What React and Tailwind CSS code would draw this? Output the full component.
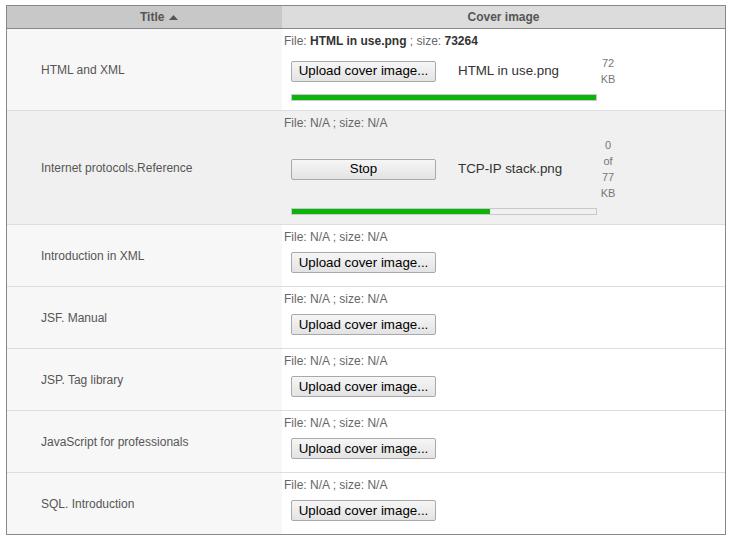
import React from 'react';

const rows = [
    { title: 'HTML and XML', file: 'HTML in use.png', size: '73264', upload: { name: 'HTML in use.png', lines: ['72', 'KB'], pct: 100, label: 'Upload cover image...' }, h: 'h-[82px]' },
    { title: 'Internet protocols.Reference', upload: { name: 'TCP-IP stack.png', lines: ['0', 'of', '77', 'KB'], pct: 65, label: 'Stop' }, h: 'h-[114px]', active: true },
    { title: 'Introduction in XML', h: 'h-[62px]' },
    { title: 'JSF. Manual', h: 'h-[62px]' },
    { title: 'JSP. Tag library', h: 'h-[62px]' },
    { title: 'JavaScript for professionals', h: 'h-[62px]' },
    { title: 'SQL. Introduction', h: 'h-[61px]', last: true },
];

const Button = ({ children }) => (
    <button className="h-[21px] w-[145px] shrink-0 rounded-[2px] border border-[#a9a9a9] bg-linear-to-b from-[#f6f6f6] to-[#e3e3e3] text-[13.333px] leading-none text-black">
        {children}
    </button>
);

const FileInfo = ({ file, size }) => (
    <div className="pl-[2px] pt-[4px] text-[12px] leading-[16px] text-[#666]">
        File: {file ? <b className="text-[#333]">{file}</b> : 'N/A'} ; size: {size ? <b className="text-[#333]">{size}</b> : 'N/A'}
    </div>
);

const SortArrow = () => (
    <svg width="9" height="5" viewBox="0 0 9 5" className="ml-[5px]">
        <path d="M0 5 L4.5 0 L9 5 Z" fill="#555" />
    </svg>
);

export default function App() {
    return (
        <div className="min-h-screen bg-white pt-[5px] pl-[6px]" style={{ fontFamily: '"Liberation Sans", Arial, sans-serif' }}>
            <div className="w-[720px] border border-[#888]">
                <div className="flex h-[23px] border-b border-[#888] text-[12px] font-bold text-[#555]">
                    <div className="flex w-[275px] items-center bg-[#c8c8c8] pl-[133px]">
                        Title
                        <SortArrow />
                    </div>
                    <div className="flex flex-1 items-center justify-center bg-[#dcdcdc]">Cover image</div>
                </div>

                {rows.map((row) => (
                    <div key={row.title} className={`flex ${row.h} ${row.last ? '' : 'border-b border-[#dddddd]'} ${row.active ? 'bg-[#f0f0f0]' : ''}`}>
                        <div className={`flex w-[275px] items-center pl-[34px] text-[12px] text-[#555] ${row.active ? '' : 'bg-[#f7f7f7]'}`}>
                            {row.title}
                        </div>
                        <div className={`flex-1 ${row.active ? '' : 'bg-white'}`}>
                            <FileInfo file={row.file} size={row.size} />
                            {row.upload ? (
                                <div className="ml-[9px]">
                                    <div className="mt-[6px] flex items-center">
                                        <Button>{row.upload.label}</Button>
                                        <div className="ml-[22px] w-[142px] text-[13.333px] text-[#333]">{row.upload.name}</div>
                                        <div className="w-[16px] text-center text-[11px] leading-[16px] text-[#777]">
                                            {row.upload.lines.map((l, i) => (
                                                <div key={i}>{l}</div>
                                            ))}
                                        </div>
                                    </div>
                                    <div className="mt-[7px] h-[7px] w-[306px] border border-[#c8c8c8] bg-[#f0f0f0]">
                                        <div className="h-full bg-[#0ab40a]" style={{ width: `${row.upload.pct}%` }} />
                                    </div>
                                </div>
                            ) : (
                                <div className="ml-[9px] mt-[7px] flex">
                                    <Button>Upload cover image...</Button>
                                </div>
                            )}
                        </div>
                    </div>
                ))}
            </div>
        </div>
    );
}
